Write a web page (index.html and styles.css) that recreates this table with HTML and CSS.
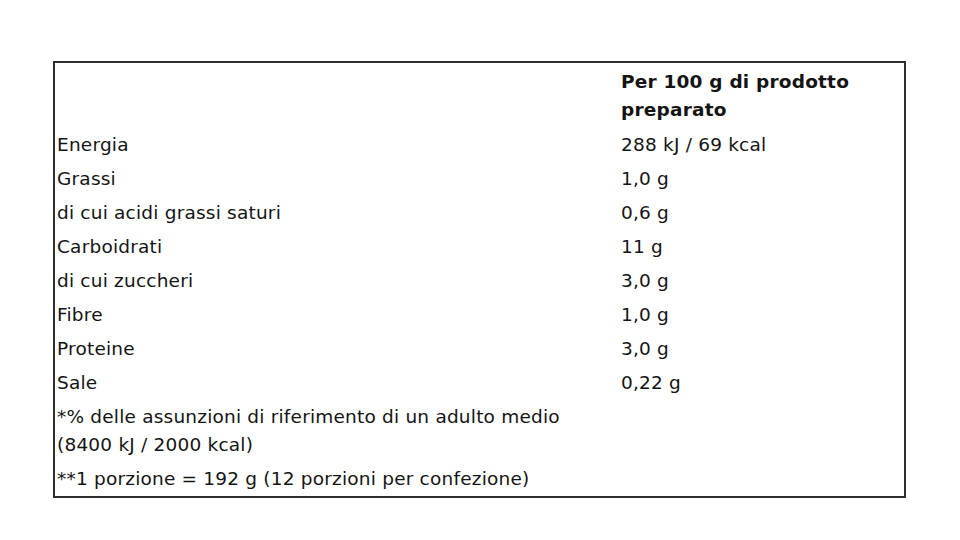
FILE: index.html
```html
<!DOCTYPE html>
<html lang="it">
<head>
<meta charset="utf-8">
<title>Valori nutrizionali</title>
<link rel="stylesheet" href="styles.css">
</head>
<body>
<div class="page">
  <table class="nutri">
    <thead>
      <tr>
        <th class="label"></th>
        <th class="value head">Per 100 g di prodotto preparato</th>
      </tr>
    </thead>
    <tbody>
      <tr><td class="label">Energia</td><td class="value">288 kJ / 69 kcal</td></tr>
      <tr><td class="label">Grassi</td><td class="value">1,0 g</td></tr>
      <tr><td class="label">di cui acidi grassi saturi</td><td class="value">0,6 g</td></tr>
      <tr><td class="label">Carboidrati</td><td class="value">11 g</td></tr>
      <tr><td class="label">di cui zuccheri</td><td class="value">3,0 g</td></tr>
      <tr><td class="label">Fibre</td><td class="value">1,0 g</td></tr>
      <tr><td class="label">Proteine</td><td class="value">3,0 g</td></tr>
      <tr><td class="label">Sale</td><td class="value">0,22 g</td></tr>
      <tr><td class="note" colspan="2">*% delle assunzioni di riferimento di un adulto medio<br>(8400 kJ / 2000 kcal)</td></tr>
      <tr><td class="note" colspan="2">**1 porzione = 192 g (12 porzioni per confezione)</td></tr>
    </tbody>
  </table>
</div>
</body>
</html>
```

FILE: styles.css
```css
html, body {
  margin: 0;
  padding: 0;
  background: #ffffff;
}

.page {
  padding: 61px 0 0 53px;
}

.nutri {
  width: 853px;
  border: 2px solid #2e2e2e;
  border-collapse: separate;
  border-spacing: 0;
  font-family: "DejaVu Sans", "Liberation Sans", sans-serif;
  font-size: 18.5px;
  line-height: 28px;
  letter-spacing: 0.2px;
  color: #141414;
  table-layout: fixed;
}

.nutri th,
.nutri td {
  padding: 3px 2px;
  text-align: left;
  vertical-align: top;
  font-weight: normal;
}

.nutri .label {
  width: 560px;
}

.nutri .head {
  font-weight: bold;
  padding-top: 5px;
  padding-bottom: 4px;
  padding-right: 40px;
}
```
